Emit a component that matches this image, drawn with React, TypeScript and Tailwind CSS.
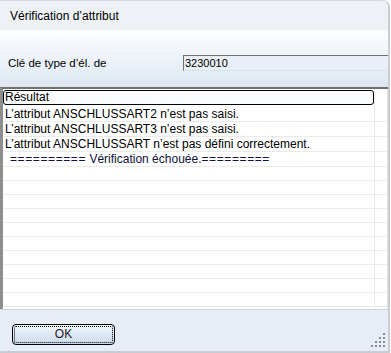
import React from 'react';

const rows = [
  'L\u2019attribut ANSCHLUSSART2 n\u2019est pas saisi.',
  'L\u2019attribut ANSCHLUSSART3 n\u2019est pas saisi.',
  'L\u2019attribut ANSCHLUSSART n\u2019est pas défini correctement.',
];

const ResizeGrip = () => {
  const dots: [number, number][] = [];
  for (let r = 0; r < 4; r++) {
    for (let c = 3 - r; c < 4; c++) dots.push([c * 4, r * 4]);
  }
  return (
    <svg width="15" height="15" viewBox="0 0 15 15" className="absolute right-[2px] bottom-[3px]">
      {dots.map(([x, y], i) => (
        <rect key={i} x={x} y={y} width="2" height="2" fill="#8c8c8c" />
      ))}
    </svg>
  );
};

const App = () => {
  return (
    <div className="w-[391px] h-[353px] bg-white">
      <div
        className="relative w-[390px] h-[353px] flex flex-col overflow-hidden rounded-tr-[7px] border-r-2 border-t border-b-2 border-[#c9cdd2] border-t-[#d6dadf] text-black"
        style={{ fontFamily: '"Liberation Sans", Arial, sans-serif' }}
      >
        {/* Title bar */}
        <div className="h-[29px] shrink-0 bg-[#eef2f6] flex items-center pl-[10px] text-[12px]">
          Vérification d’attribut
        </div>

        {/* Form panel */}
        <div className="h-[57px] shrink-0 bg-gradient-to-b from-[#fdfeff] to-[#dde7f2] flex items-start pt-[25px]">
          <div className="w-[183px] pl-[8px] text-[11.5px] leading-[16px]">Clé de type d’él. de</div>
          <div className="flex-1 h-[16px] border-t border-l border-[#6f6f6f] border-b border-b-[#d9e1ea] bg-[#e9eff6] pl-[1px] text-[11px] leading-[14px]">
            3230010
          </div>
        </div>

        {/* Result grid */}
        <div className="flex-1 flex border-t-2 border-[#707070] border-l-[3px] border-l-[#8e8e8e] bg-white overflow-hidden">
          <div className="w-[371px] flex flex-col pt-[1px]">
            <div className="h-[15px] border border-black rounded-[3px] bg-[#fbfcfe] text-[12px] leading-[13px] pl-[1px]">
              Résultat
            </div>
            <div className="h-[2px]" />
            {rows.map((t) => (
              <div key={t} className="h-[15px] shrink-0 border-b border-[#ebebeb] text-[12px] leading-[14px] pl-[2px]">
                {t}
              </div>
            ))}
            <div className="h-[15px] shrink-0 border-b border-[#ebebeb] text-[12px] leading-[14px] pl-[7px] text-[#101040]">
              <span className="tracking-[0.6px]">==========</span> Vérification échouée.
              <span className="tracking-[0.6px]">=========</span>
            </div>
            {Array.from({ length: 10 }).map((_, i) => (
              <div key={i} className="h-[14px] shrink-0 border-b border-[#ebebeb]" />
            ))}
          </div>
          <div className="flex-1 flex flex-col border-l border-[#ebebeb] pt-[18px]">
            {Array.from({ length: 14 }).map((_, i) => (
              <div key={i} className={`${i < 4 ? 'h-[15px]' : 'h-[14px]'} shrink-0 border-b border-[#ebebeb]`} />
            ))}
          </div>
          <div className="w-[1px] bg-[#e2e2e2]" />
        </div>

        {/* Bottom panel */}
        <div className="h-[42px] shrink-0 bg-[#e6edf7] border-t border-[#cdd3da] pt-[11px] pl-[12px]">
          <button className="w-[103px] h-[21px] rounded-[4px] border border-black p-[1px] bg-gradient-to-b from-[#f2f6fb] via-[#dde8f4] to-[#c9daee]">
            <div className="w-full h-full border border-dotted border-black rounded-[2px] flex items-center justify-center text-[12px] text-[#1a1a1a]">
              OK
            </div>
          </button>
        </div>

        <ResizeGrip />
      </div>
    </div>
  );
};

export default App;
